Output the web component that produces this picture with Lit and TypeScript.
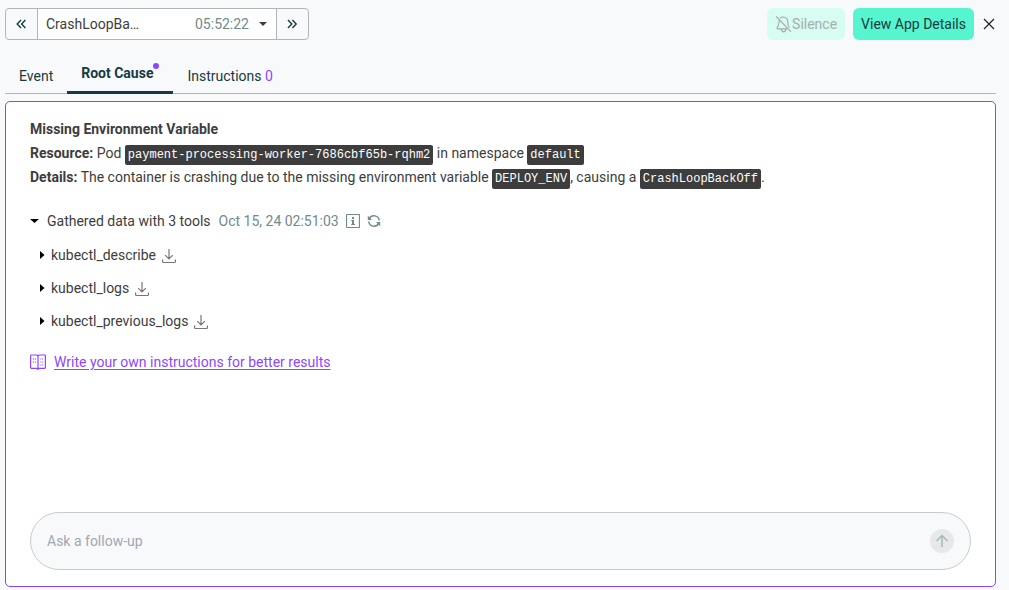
import { LitElement, html, svg, css } from "lit";
import { customElement, state } from "lit/decorators.js";

const chevrons = (right: boolean) => html`
  <svg class="icon" width="12" height="12" viewBox="0 0 12 12" aria-hidden="true">
    ${right
      ? svg`<path d="M1 2l3.8 4L1 10M5.400 2l3.8 4-3.8 4" fill="none" stroke="currentColor" stroke-width="1.4"/>`
      : svg`<path d="M5 2L1.200 6l3.8 4M9.400 2L5.600 6l3.8 4" fill="none" stroke="currentColor" stroke-width="1.4"/>`}
  </svg>`;

const downloadIcon = html`
  <svg class="icon" width="14" height="16" viewBox="0 0 14 16" fill="none" stroke="currentColor" stroke-width="1.2" aria-hidden="true">
    <path d="M7 1v9.8M3.2 7.2L7 11l3.8-3.8M.6 11.500v2.200q0 .8.8.8h11.200q.8 0 .8-.8v-2.200"/>
  </svg>`;

@customElement("app-root")
export class AppRoot extends LitElement {
  static styles = css`
    :host {
      display: flex;
      flex-direction: column;
      box-sizing: border-box;
      min-height: 100vh;
      padding: 8px 13px 3px 5px;
      background: #f8f9fb;
      color: #3d3d3d;
      font: 14px/24px Roboto, sans-serif;
    }
    * { box-sizing: border-box; }
    button, select, input { font: inherit; color: inherit; margin: 0; }
    button { border: 0; background: none; padding: 0; cursor: pointer; }
    .icon { display: block; flex: none; }

    .toolbar { display: flex; justify-content: space-between; align-items: center; }
    .picker {
      display: flex;
      height: 32px;
      border: 1px solid #b2b4b6;
      border-radius: 4px;
      overflow: hidden;
    }
    .step {
      display: flex;
      align-items: center;
      justify-content: center;
      width: 31px;
      color: #173a3e;
    }
    .choice {
      display: grid;
      width: 240px;
      border: solid #b2b4b6;
      border-width: 0 1px;
      background: #fff;
    }
    .choice > * { grid-area: 1 / 1; }
    .choice select {
      appearance: none;
      width: 100%;
      min-width: 0;
      border: 0;
      background: none;
      padding: 0 134px 0 8px;
      text-overflow: ellipsis;
      overflow: hidden;
      white-space: nowrap;
    }
    .time {
      display: flex;
      align-items: center;
      justify-self: end;
      gap: 10px;
      padding-right: 9px;
      color: #6f8b8c;
      pointer-events: none;
    }
    .time .icon { color: #3d3d3d; }
    .actions { display: flex; align-items: center; gap: 8px; }
    .action {
      display: flex;
      align-items: center;
      height: 32px;
      padding: 0 8px;
      border-radius: 6px;
      background: #56f5cf;
      color: #173a3e;
    }
    .action:disabled { background: #d7fcf2; color: #a6aead; cursor: default; }
    .close { width: 14px; height: 32px; color: #222; }

    .tabs {
      display: flex;
      align-items: flex-end;
      height: 34px;
      margin-top: 20px;
      border-bottom: 1px solid #b2b4b6;
    }
    .tab { padding: 0 14px 5px; color: #173a3e; }
    .tab.on {
      position: relative;
      padding-right: 20px;
      margin-bottom: -1px;
      padding-bottom: 6px;
      border-bottom: 3px solid #173a3e;
      font-weight: 700;
    }
    .dot {
      position: absolute;
      top: 2px;
      right: 14px;
      width: 6px;
      height: 6px;
      border-radius: 50%;
      background: #8c46ff;
    }
    .count { color: #8c46ff; }

    .panel {
      display: flex;
      flex-direction: column;
      flex: 1;
      margin-top: 7px;
      padding: 15px 24px 16px;
      border: 1px solid #8846f5;
      border-radius: 5px;
      background: #fff;
    }
    p { margin: 0; }
    code {
      padding: 3px;
      border-radius: 2px;
      background: #3d3d3d;
      color: #fff;
      font: 12px/14px "Liberation Mono", monospace;
    }
    .gathered { display: flex; align-items: center; gap: 8px; margin-top: 20px; color: #6f8b8c; }
    .toggle { display: flex; align-items: center; gap: 8px; color: #3d3d3d; }
    .toggle .icon { color: #000; }
    .tools { list-style: none; margin: 10px 0 0; padding: 0 0 0 9px; }
    .tool { display: flex; align-items: center; gap: 6px; height: 24px; margin-bottom: 9px; }
    .tool .toggle { gap: 6px; }
    .save { padding-top: 2px; color: #777; }
    .meta { display: flex; align-items: center; gap: 7px; }
    .hint { display: flex; align-items: center; gap: 8px; margin-top: 8px; color: #8c46ff; }
    .hint a { color: inherit; text-underline-offset: 2px; }
    .ask {
      display: flex;
      align-items: center;
      height: 58px;
      margin-top: auto;
      padding: 0 16px;
      border: 1px solid #c8cccd;
      border-radius: 29px;
      background: #f8f9fb;
    }
    .ask input { flex: 1; min-width: 0; border: 0; padding: 0; background: none; outline: 0; }
    .ask input::placeholder { color: #a0a6b4; opacity: 1; }
    .send {
      display: grid;
      place-items: center;
      width: 24px;
      height: 24px;
      border-radius: 50%;
      background: #e7e8e8;
      color: #a8b8b8;
    }
  `;

  @state() private tab = "Root Cause";
  private tools = ["kubectl_describe", "kubectl_logs", "kubectl_previous_logs"];

  private renderTab(name: string, extra: unknown = "") {
    const on = this.tab === name;
    return html`<button class="tab ${on ? "on" : ""}" role="tab" aria-selected=${on}
      @click=${() => (this.tab = name)}>${name}${extra}</button>`;
  }

  render() {
    return html`
      <header class="toolbar">
        <div class="picker">
          <button class="step" aria-label="Previous event">${chevrons(false)}</button>
          <div class="choice">
            <select aria-label="Event"><option>CrashLoopBackOff</option></select>
            <span class="time">05:52:22
              <svg class="icon" width="8" height="4" viewBox="0 0 8 4" aria-hidden="true"><path d="M0 0h8L4 4z" fill="currentColor"/></svg>
            </span>
          </div>
          <button class="step" aria-label="Next event">${chevrons(true)}</button>
        </div>
        <div class="actions">
          <button class="action" disabled>
            <svg class="icon" width="17" height="18" viewBox="0 0 17 18" fill="none" stroke="currentColor" stroke-width="1.2" aria-hidden="true">
              <path d="M1.200 1.500l14.800 15.300M5 3.200Q6.300 2 8.400 2q4 .3 4.300 4.600 0 3.400 1.700 6.200M4.200 5.200q-.2 5.200-2 7.600-.5 1 .4 1.100h9.600M6.200 14.200q.4 2.600 2.400 2.600t2.400-2.600"/>
            </svg>Silence</button>
          <button class="action">View App Details</button>
          <button class="close" aria-label="Close">
            <svg class="icon" width="14" height="14" viewBox="0 0 14 14" aria-hidden="true"><path d="M2 2l10 10M12 2L2 12" stroke="currentColor" stroke-width="1.2"/></svg>
          </button>
        </div>
      </header>

      <nav class="tabs" role="tablist">
        ${this.renderTab("Event")}
        ${this.renderTab("Root Cause", html`<span class="dot"></span>`)}
        ${this.renderTab("Instructions", html` <span class="count">0</span>`)}
      </nav>

      <main class="panel">
        <p><b>Missing Environment Variable</b></p>
        <p><b>Resource:</b> Pod <code>payment-processing-worker-7686cbf65b-rqhm2</code> in namespace <code>default</code></p>
        <p><b>Details:</b> The container is crashing due to the missing environment variable <code>DEPLOY_ENV</code>, causing a <code>CrashLoopBackOff</code>.</p>

        <div class="gathered">
          <button class="toggle" aria-expanded="true">
            <svg class="icon" width="9" height="4" viewBox="0 0 9 4" aria-hidden="true"><path d="M0 0h9L4.500 4z" fill="currentColor"/></svg>
            Gathered data with 3 tools</button>
          <span class="meta">Oct 15, 24 02:51:03
            <button aria-label="Info">
              <svg class="icon" width="14" height="14" viewBox="0 0 14 14" aria-hidden="true">
                <rect x=".5" y=".5" width="13" height="13" rx="1" fill="none" stroke="currentColor" stroke-width="1.2"/>
                <path d="M6 3h2v2H6zM5.200 6H8v4h1v1H5.200v-1H6V7h-.8z" fill="currentColor"/>
              </svg>
            </button>
            <button aria-label="Refresh">
              <svg class="icon" width="14" height="14" viewBox="0 0 14 14" aria-hidden="true">
                <path d="M2.400 4.600A5.200 5.200 0 0 1 12.200 6.500M11.600 9.400A5.200 5.200 0 0 1 1.800 7.500" fill="none" stroke="currentColor" stroke-width="1.500"/>
                <path d="M.8 1.800v4.200H5zM13.200 12.200V8H9z" fill="currentColor"/>
              </svg>
            </button>
          </span>
        </div>

        <ul class="tools">
          ${this.tools.map((t) => html`
            <li class="tool">
              <button class="toggle" aria-expanded="false">
                <svg class="icon" width="6" height="8" viewBox="0 0 6 8" aria-hidden="true"><path d="M1 0l4.500 4L1 8z" fill="currentColor"/></svg>
                ${t}</button>
              <button class="save" aria-label="Download ${t}">${downloadIcon}</button>
            </li>`)}
        </ul>

        <div class="hint">
          <svg class="icon" width="16" height="16" viewBox="0 0 16 16" fill="none" stroke="currentColor" stroke-width="1.2" aria-hidden="true">
            <path d="M8 2Q7.600 1 6.600 1H1.400Q.6 1 .6 1.800v11.800q0 .8.8.8h5.200q1 0 1.400 1 .4-1 1.400-1h5.200q.8 0 .8-.8V1.800Q15.400 1 14.600 1H9.400Q8.400 1 8 2zV15"/>
            <path d="M2.800 5H4M4.800 5H6M2.800 8H4M4.800 8H6M10.400 5h1M12.200 5h1M10.400 8h1M12.200 8h1M10.400 11h1M12.200 11h1"/>
          </svg>
          <a href="#instructions">Write your own instructions for better results</a>
        </div>

        <form class="ask" @submit=${(e: Event) => e.preventDefault()}>
          <input type="text" aria-label="Ask a follow-up" placeholder="Ask a follow-up" />
          <button class="send" aria-label="Send">
            <svg class="icon" width="14" height="14" viewBox="0 0 14 14" fill="none" stroke="currentColor" stroke-width="1.500" aria-hidden="true"><path d="M7 13V1.500M1.500 7L7 1.500 12.500 7"/></svg>
          </button>
        </form>
      </main>
    `;
  }
}
